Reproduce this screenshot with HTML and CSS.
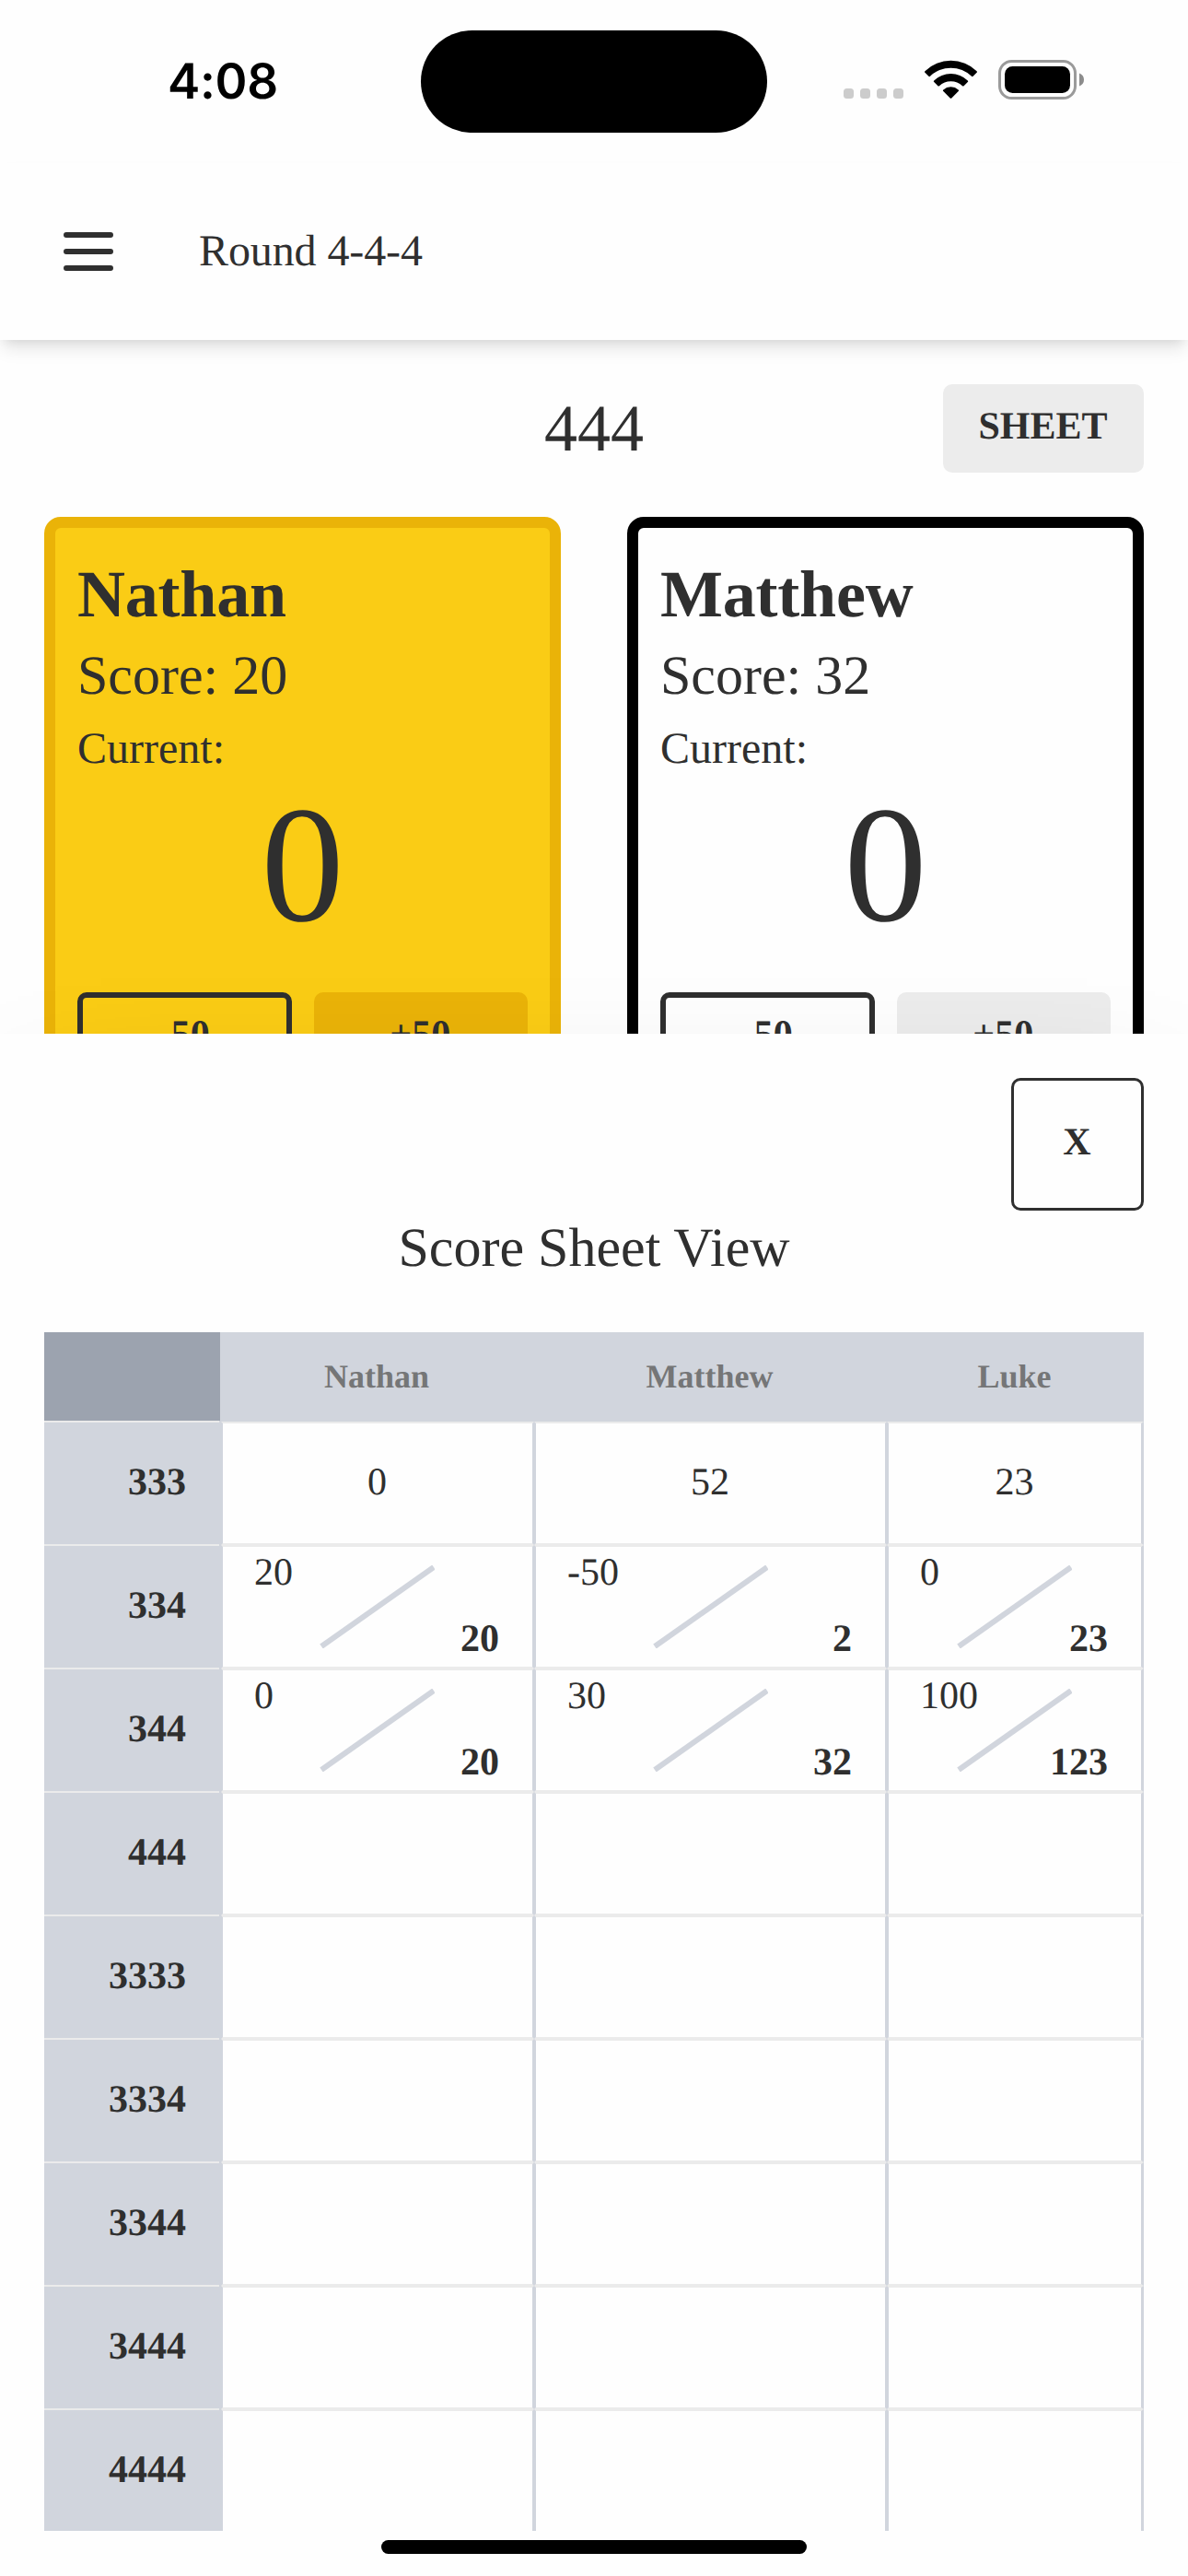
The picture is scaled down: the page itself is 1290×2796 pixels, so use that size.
FILE: index.html
```html
<!DOCTYPE html>
<html lang="en">
<head>
<meta charset="utf-8">
<title>Round 4-4-4</title>
<link rel="stylesheet" href="styles.css">
</head>
<body>
<div class="screen">
  <div class="statusbar">
    <span class="clock">4:08</span>
    <span class="island"></span>
    <svg class="status-icons" width="264" height="48" viewBox="914 62 264 48">
      <g fill="#ccc">
        <rect x="916" y="96" width="11" height="11" rx="3.5"/>
        <rect x="934" y="96" width="11" height="11" rx="3.5"/>
        <rect x="952" y="96" width="11" height="11" rx="3.5"/>
        <rect x="970" y="96" width="11" height="11" rx="3.5"/>
      </g>
      <path d="M1004.4 77.2a40.5 40.5 0 0 1 56.2 0q.8.8 0 1.6l-4 4q-.8.8-1.600 0a32.200 32.200 0 0 0-45 0q-.8.8-1.600 0l-4-4q-.8-.8 0-1.600zM1014.200 87.400a26.500 26.500 0 0 1 36.600 0q.8.8 0 1.600l-4.200 4.200q-.8.8-1.600 0a18 18 0 0 0-25 0q-.8.8-1.600 0l-4.200-4.200q-.8-.8 0-1.600zM1024.300 97.400a12.400 12.400 0 0 1 16.400 0q.8.800 0 1.600l-7.400 7.400q-.8.800-1.600 0l-7.400-7.400q-.8-.8 0-1.600z"/>
      <rect x="1085.500" y="66.500" width="82" height="40" rx="13" fill="none" stroke="#9a9a9a" stroke-width="3"/>
      <rect x="1091" y="72" width="71" height="29" rx="8.500"/>
      <path d="M1172 79.500q5 2 5 7t-5 7z" fill="#8c8c8c"/>
    </svg>
  </div>
  <header class="navbar">
    <svg class="menu" width="54" height="42" viewBox="0 0 54 42">
      <path d="M3 3h48M3 21h48M3 39h48" stroke="#2f2f2f" stroke-width="6" stroke-linecap="round"/>
    </svg>
    <span class="navbar-title">Round 4-4-4</span>
  </header>
  <main class="game">
    <div class="round-row">
      <span class="round">444</span>
      <button class="btn btn-soft">SHEET</button>
    </div>
    <div class="players">
      <section class="player active">
        <h2 class="name">Nathan</h2>
        <div class="score">Score: 20</div>
        <div class="current">Current:</div>
        <div class="points">0</div>
        <div class="actions"><button class="btn btn-line">-50</button><button class="btn btn-soft">+50</button></div>
      </section>
      <section class="player">
        <h2 class="name">Matthew</h2>
        <div class="score">Score: 32</div>
        <div class="current">Current:</div>
        <div class="points">0</div>
        <div class="actions"><button class="btn btn-line">-50</button><button class="btn btn-soft">+50</button></div>
      </section>
    </div>
  </main>
  <div class="sheet">
    <button class="btn close">X</button>
    <h3 class="sheet-title">Score Sheet View</h3>
    <div class="table">
      <div class="row head"><div class="corner"></div><div>Nathan</div><div>Matthew</div><div>Luke</div></div>
      <div class="row"><div class="label">333</div><div class="cell">0</div><div class="cell">52</div><div class="cell">23</div></div>
      <div class="row"><div class="label">334</div>
        <div class="cell split"><span>20</span><svg class="slash" viewBox="0 0 126 90"><path d="M3 88L125 2"/></svg><b>20</b></div>
        <div class="cell split"><span>-50</span><svg class="slash" viewBox="0 0 126 90"><path d="M3 88L125 2"/></svg><b>2</b></div>
        <div class="cell split"><span>0</span><svg class="slash" viewBox="0 0 126 90"><path d="M3 88L125 2"/></svg><b>23</b></div></div>
      <div class="row"><div class="label">344</div>
        <div class="cell split"><span>0</span><svg class="slash" viewBox="0 0 126 90"><path d="M3 88L125 2"/></svg><b>20</b></div>
        <div class="cell split"><span>30</span><svg class="slash" viewBox="0 0 126 90"><path d="M3 88L125 2"/></svg><b>32</b></div>
        <div class="cell split"><span>100</span><svg class="slash" viewBox="0 0 126 90"><path d="M3 88L125 2"/></svg><b>123</b></div></div>
      <div class="row"><div class="label">444</div><div class="cell"></div><div class="cell"></div><div class="cell"></div></div>
      <div class="row"><div class="label">3333</div><div class="cell"></div><div class="cell"></div><div class="cell"></div></div>
      <div class="row"><div class="label">3334</div><div class="cell"></div><div class="cell"></div><div class="cell"></div></div>
      <div class="row"><div class="label">3344</div><div class="cell"></div><div class="cell"></div><div class="cell"></div></div>
      <div class="row"><div class="label">3444</div><div class="cell"></div><div class="cell"></div><div class="cell"></div></div>
      <div class="row"><div class="label">4444</div><div class="cell"></div><div class="cell"></div><div class="cell"></div></div>
    </div>
  </div>
  <div class="home-indicator"></div>
</div>
</body>
</html>
```
FILE: styles.css
```css
* { box-sizing: border-box; }
body {
  margin: 0;
  background: #fefefe;
  color: #2f2f2f;
  font-family: "Liberation Serif", "Times New Roman", serif;
  text-rendering: geometricPrecision;
}
.screen {
  position: relative;
  width: 1290px;
  height: 2796px;
  overflow: hidden;
}

/* status bar */
.statusbar {
  display: grid;
  grid-template-columns: 457px 376px 457px;
  height: 177px;
  padding-top: 33px;
}
.clock {
  padding-left: 182px;
  font: 600 53px/110px Inter, sans-serif;
  letter-spacing: -0.3px;
  color: #000;
}
.island {
  height: 111px;
  border-radius: 56px;
  background: #000;
}
.status-icons { margin: 29px 0 0 81px; }

/* navigation */
.navbar {
  display: flex;
  align-items: center;
  gap: 93px;
  height: 192px;
  padding-left: 69px;
  box-shadow: 0 12px 18px -3px rgba(0, 0, 0, .1), 0 6px 12px -6px rgba(0, 0, 0, .1);
}
.navbar-title { font-size: 48px; line-height: 72px; letter-spacing: -0.1px; }

/* current round */
.game { padding: 48px; }
.round-row {
  display: grid;
  grid-template-columns: 1fr auto 1fr;
  align-items: center;
}
.round { grid-column: 2; font-size: 72px; line-height: 96px; }
.round-row .btn { justify-self: end; width: 218px; }
.btn {
  height: 96px;
  padding: 0 1px 5px 0;
  border: 0;
  border-radius: 10px;
  background: transparent;
  color: inherit;
  font: bold 42px/48px "Liberation Serif", serif;
  text-rendering: inherit;
}
.btn-soft { background: #ececec; }
.btn-line { border: 6px solid #2f2f2f; }
.players {
  display: grid;
  grid-template-columns: 1fr 1fr;
  gap: 72px;
  margin-top: 48px;
}
.player {
  height: 720px;
  padding: 24px;
  border: 12px solid #000;
  border-radius: 18px;
}
.player.active { background: #facc15; border-color: #eab308; }
.active .btn-soft { background: #eab308; }
.name { margin: 0; font-size: 72px; line-height: 96px; letter-spacing: -0.2px; }
.score { font-size: 60px; line-height: 80px; }
.current { font-size: 48px; line-height: 80px; }
.points { font-size: 180px; line-height: 172px; text-align: center; }
.actions {
  display: grid;
  grid-template-columns: 1fr 1fr;
  gap: 24px;
  margin-top: 52px;
}

/* score sheet overlay */
.sheet {
  position: absolute;
  left: 0;
  right: 0;
  top: 1122px;
  bottom: 0;
  display: flex;
  flex-direction: column;
  padding: 48px;
  background: #fefefe;
  box-shadow: 0 75px 150px -36px rgba(0, 0, 0, .25);
}
.close {
  align-self: flex-end;
  flex: none;
  width: 144px;
  height: 144px;
  border: 3px solid #2f2f2f;
}
.sheet-title {
  margin: 0 0 52px;
  font-size: 60px;
  font-weight: normal;
  line-height: 80px;
  text-align: center;
}
.row {
  display: grid;
  grid-template-columns: 192px 340px 383px 279px;
  height: 134px;
  font-size: 42px;
  line-height: 48px;
}
.head {
  height: 97px;
  background: #d1d5dd;
  color: #757677;
  font-size: 36px;
  font-weight: bold;
  line-height: 96px;
  text-align: center;
}
.head div { padding-right: 2px; }
.corner { width: 191px; height: 96px; background: #9ca3af; }
.label {
  position: relative;
  padding: 42px 38px 0 0;
  background: #d1d5dd;
  font-weight: bold;
  text-align: right;
}
/* rule sits one pixel above the row and stops short of the column edge */
.label::before {
  content: "";
  position: absolute;
  left: 0;
  right: 2px;
  top: -1px;
  height: 2px;
  background: #ebebeb;
}
.cell {
  padding: 40px 1px 0 0;
  border: 2px solid #ebebeb;
  border-left-color: #d1d5dd;
  border-right-color: #d1d5dd;
  text-align: center;
}
.cell:last-child { border-right-width: 3px; }
.row:last-child { height: 132px; margin-bottom: -4px; }
.row:last-child .cell { border-bottom: 0; }
.split {
  display: grid;
  grid-template-columns: minmax(0, 1fr) 126px minmax(0, 1fr);
  padding: 4px 36px 6px 34px;
}
.split span { justify-self: start; white-space: nowrap; }
.split b { align-self: end; justify-self: end; white-space: nowrap; }
.slash {
  width: 126px;
  height: 90px;
  margin-top: 16px;
  fill: none;
  stroke: #d1d5dd;
  stroke-width: 6;
}

.home-indicator {
  position: absolute;
  left: 414px;
  bottom: 24px;
  width: 462px;
  height: 15px;
  border-radius: 8px;
  background: #000;
}
```
